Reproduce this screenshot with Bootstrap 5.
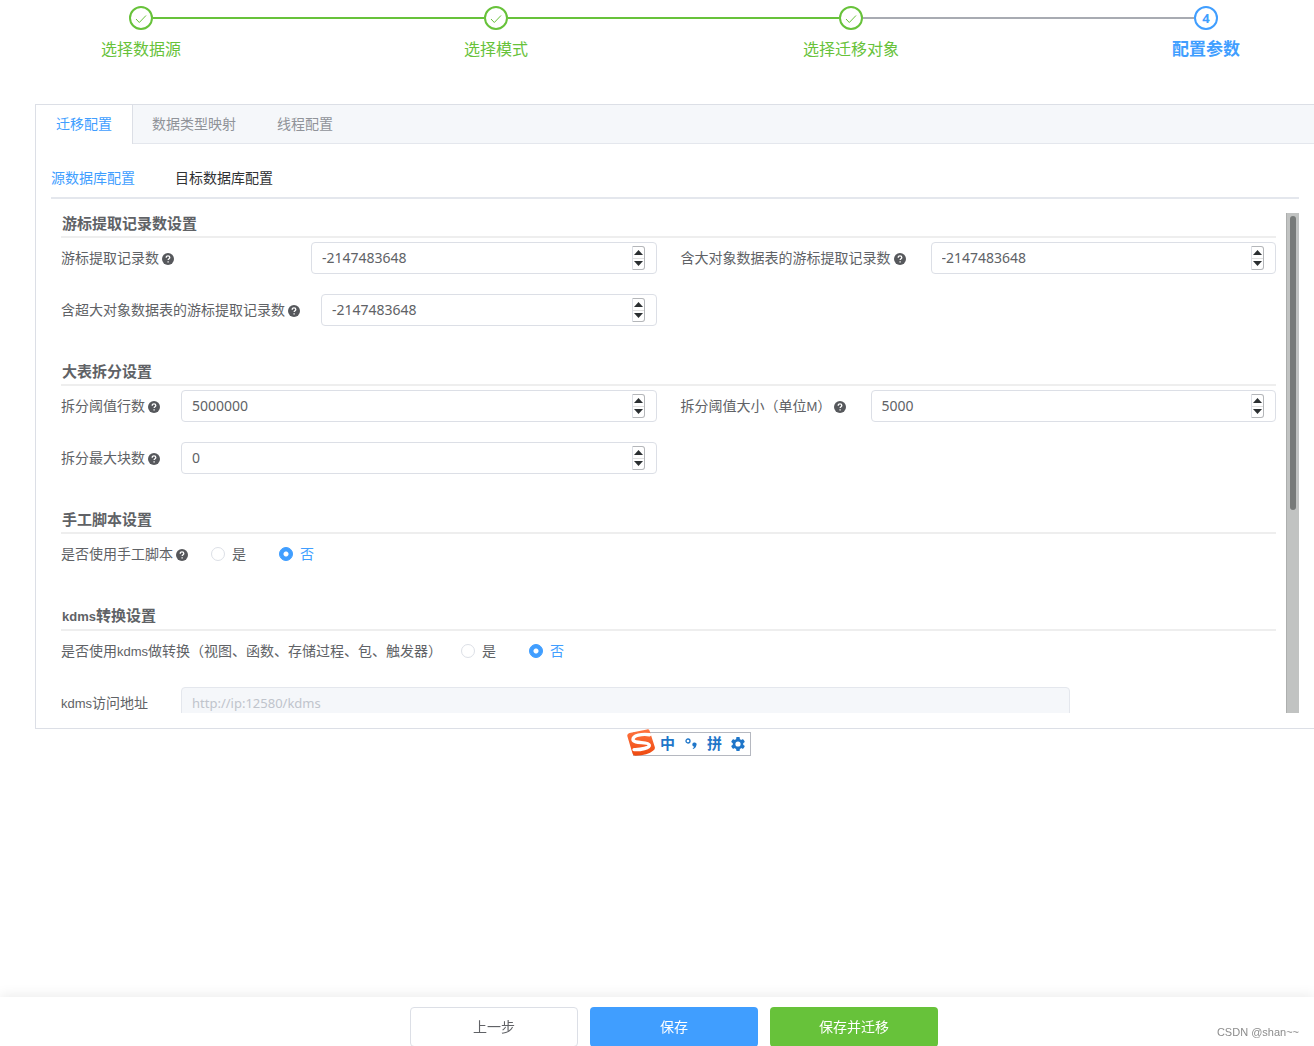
<!DOCTYPE html>
<html lang="zh-CN">
<head>
<meta charset="utf-8">
<meta name="viewport" content="width=device-width, initial-scale=1">
<title>配置参数</title>
<link href="https://cdn.jsdelivr.net/npm/bootstrap@5.3.0/dist/css/bootstrap.min.css" rel="stylesheet">
<style>
  :root { --blue: #409eff; --green: #67c23a; --text: #606266; --line: #dcdfe6; --line-soft: #e4e7ed; --fill: #f5f7fa; }
  body { font-family: "Liberation Sans", "Noto Sans CJK SC", sans-serif; font-size: 14px; line-height: 20px; color: var(--text); min-height: 100vh; }
  a { text-decoration: none; color: inherit; }

  /* step bar */
  .steps { padding: 6px 96px 0 129px; height: 104px; list-style: none; margin: 0; }
  .step { width: 24px; color: var(--green); font-size: 16px; line-height: 24px; }
  .step-icon { width: 24px; height: 24px; border: 2px solid currentColor; border-radius: 50%; flex: none; margin-bottom: 8px; }
  .step-line { height: 2px; background: var(--green); margin-top: 11px; }
  .step-line.pending { background: #a8abb2; }
  .step.current { color: var(--blue); font-weight: 700; font-size: 17px; }
  .step.current .step-icon { font: 700 13px "Noto Sans", sans-serif; }

  /* outer panel */
  .config-panel { margin-left: 35px; border: 1px solid var(--line); border-right: 0; }
  .tab-head { background: var(--fill); border-bottom: 1px solid var(--line-soft); height: 39px; }
  .tab-head a { padding: 0 20px; line-height: 39px; color: #909399; margin-right: 1px; }
  .tab-head a.active { background: #fff; color: var(--blue); border-right: 1px solid var(--line); height: 39px; margin-right: -1px; }
  .panel-inner { padding: 15px; }
  .sub-tabs { height: 40px; border-bottom: 2px solid var(--line-soft); gap: 40px; margin-bottom: 14px; color: #303133; line-height: 38px; }
  .sub-tabs a.active { color: var(--blue); }

  /* scrolling form */
  .scroll-view { height: 500px; overflow: hidden; }
  .form-body { padding: 0 10px; min-width: 0; }
  .form-body > * { flex-shrink: 0; }
  .track { width: 13px; flex: none; background: #c1c3c2; border-left: 1px solid #adafae; padding: 3px 3px; }
  .thumb { height: 294px; border-radius: 3px; background: #777a79; }
  .group-title { font-size: 15px; font-weight: 700; line-height: 21px; padding: 0 0 2px 1px; margin: 15px 0 4px; border-bottom: 2px solid #eee; }
  .group-title.first { margin-top: 0; }
  .field { height: 32px; margin-bottom: 20px; }
  .field-label { flex: none; }
  .w-120 { width: 120px; } .w-150 { width: 150px; } .w-190 { width: 190px; }
  .w-250 { width: 250px; } .w-260 { width: 260px; } .w-400 { width: 400px; }
  .latin { font-size: 13px; }
  .help { width: 12px; height: 12px; margin: 2px 0 0 3px; flex: none; }
  .field .form-control { height: 32px; padding: 0 10px 2px; border-color: var(--line); border-radius: 4px; font: 14px "Noto Sans", sans-serif; color: var(--text); }
  .field .form-control:disabled { background: var(--fill); border-color: var(--line-soft); }
  .field .form-control::placeholder { color: #c0c4cc; opacity: 1; font-size: 13px; }
  .form-control[type=number] { appearance: textfield; -moz-appearance: textfield; }
  .form-control::-webkit-inner-spin-button { display: none; }
  .stepper { top: 4px; right: 12px; width: 13px; height: 24px; border: 1px solid #b4b6b9; border-left-color: #dcdfe6; border-radius: 0 3px 3px 0; background: #fff; }
  .stepper button { flex: 1; padding: 0; border: 0; background: none; display: flex; align-items: center; justify-content: center; }
  .stepper button + button { border-top: 1px solid #e0e0e0; }
  .stepper svg { width: 9px; height: 5px; fill: #2b2f31; }
  .pick { margin-right: 33px; gap: 7px; }
  .pick .form-check-input { width: 14px; height: 14px; margin: 0; border-color: var(--line); background-image: none; }
  .pick .form-check-input:checked { background-color: var(--blue); border-color: var(--blue); background-image: radial-gradient(circle, #fff 0 2px, transparent 3px); }
  .pick .form-check-input:checked + label { color: var(--blue); }

  /* input-method bar floating over the page */
  .ime { left: 627px; top: 729px; }
  .ime-box { margin: 3px 0 0 6px; width: 118px; height: 24px; border: 1px solid #b5b8c0; background: #fff; padding: 0 5px 0 26px; color: #1f76c9; font-size: 15px; font-weight: 700; }
  .ime-logo { left: 0; top: 0; width: 28px; height: 27px; }

  /* footer */
  .action-bar { height: 49px; padding: 10px 0 0 34px; gap: 12px; background: #fff; box-shadow: 0 -2px 12px rgba(0,0,0,.08); }
  .action-bar .btn { width: 168px; height: 40px; flex: none; padding: 0; font-size: 14px; border-radius: 4px; line-height: 38px; }
  .btn-back { border-color: var(--line); color: var(--text); background: #fff; }
  .btn-save { background: var(--blue); color: #fff; }
  .btn-run { background: var(--green); color: #fff; }
  .watermark { right: 15px; bottom: 5px; font-size: 11px; line-height: 18px; color: #8c8c8c; }
</style>
<script src="https://cdn.jsdelivr.net/npm/bootstrap@5.3.0/dist/js/bootstrap.bundle.min.js"></script>
</head>
<body class="bg-white overflow-hidden">
<svg class="d-none" aria-hidden="true">
  <symbol id="i-help" viewBox="0 0 12 12"><circle cx="6" cy="6" r="6" fill="#56585c"/><path d="M4.2 4.7C4.2 3.5 5 2.9 6 2.9s1.800.6 1.800 1.600C7.800 5.700 6.100 5.700 6.100 7.100M6.100 8.200v1.200" fill="none" stroke="#fff" stroke-width="1.300"/></symbol>
  <symbol id="i-up" viewBox="0 0 9 5"><path d="M0 5 4.500 0 9 5z"/></symbol>
  <symbol id="i-down" viewBox="0 0 9 5"><path d="M0 0h9L4.500 5z"/></symbol>
  <symbol id="i-check" viewBox="0 0 20 20"><path d="m5 11 3.300 3.500L15 7.500" fill="none" stroke="currentColor" stroke-width="1"/></symbol>
</svg>

<ol class="steps d-flex align-items-start">
  <li class="step d-flex flex-column align-items-center text-nowrap"><span class="step-icon"><svg class="d-block" width="20" height="20"><use href="#i-check"/></svg></span>选择数据源</li>
  <li class="step-line flex-grow-1" aria-hidden="true"></li>
  <li class="step d-flex flex-column align-items-center text-nowrap"><span class="step-icon"><svg class="d-block" width="20" height="20"><use href="#i-check"/></svg></span>选择模式</li>
  <li class="step-line flex-grow-1" aria-hidden="true"></li>
  <li class="step d-flex flex-column align-items-center text-nowrap"><span class="step-icon"><svg class="d-block" width="20" height="20"><use href="#i-check"/></svg></span>选择迁移对象</li>
  <li class="step-line pending flex-grow-1" aria-hidden="true"></li>
  <li class="step current d-flex flex-column align-items-center text-nowrap" aria-current="step"><span class="step-icon d-flex align-items-center justify-content-center">4</span>配置参数</li>
</ol>

<main class="config-panel">
  <nav class="tab-head d-flex">
    <a href="#" class="active">迁移配置</a>
    <a href="#">数据类型映射</a>
    <a href="#">线程配置</a>
  </nav>
  <div class="panel-inner">
    <nav class="sub-tabs d-flex">
      <a href="#" class="active">源数据库配置</a>
      <a href="#">目标数据库配置</a>
    </nav>
    <div class="scroll-view d-flex">
      <form class="form-body flex-grow-1 d-flex flex-column">
        <h2 class="group-title first">游标提取记录数设置</h2>
        <div class="row gx-4">
          <div class="col-6"><div class="field d-flex align-items-center">
            <label for="f1" class="field-label w-250 d-flex align-items-center">游标提取记录数<svg class="help"><use href="#i-help"/></svg></label>
            <div class="position-relative flex-grow-1"><input id="f1" type="number" class="form-control" value="-2147483648"><span class="stepper position-absolute d-flex flex-column"><button type="button" aria-label="增加"><svg><use href="#i-up"/></svg></button><button type="button" aria-label="减少"><svg><use href="#i-down"/></svg></button></span></div>
          </div></div>
          <div class="col-6"><div class="field d-flex align-items-center">
            <label for="f2" class="field-label w-250 d-flex align-items-center">含大对象数据表的游标提取记录数<svg class="help"><use href="#i-help"/></svg></label>
            <div class="position-relative flex-grow-1"><input id="f2" type="number" class="form-control" value="-2147483648"><span class="stepper position-absolute d-flex flex-column"><button type="button" aria-label="增加"><svg><use href="#i-up"/></svg></button><button type="button" aria-label="减少"><svg><use href="#i-down"/></svg></button></span></div>
          </div></div>
          <div class="col-6"><div class="field d-flex align-items-center">
            <label for="f3" class="field-label w-260 d-flex align-items-center">含超大对象数据表的游标提取记录数<svg class="help"><use href="#i-help"/></svg></label>
            <div class="position-relative flex-grow-1"><input id="f3" type="number" class="form-control" value="-2147483648"><span class="stepper position-absolute d-flex flex-column"><button type="button" aria-label="增加"><svg><use href="#i-up"/></svg></button><button type="button" aria-label="减少"><svg><use href="#i-down"/></svg></button></span></div>
          </div></div>
        </div>

        <h2 class="group-title">大表拆分设置</h2>
        <div class="row gx-4">
          <div class="col-6"><div class="field d-flex align-items-center">
            <label for="f4" class="field-label w-120 d-flex align-items-center">拆分阈值行数<svg class="help"><use href="#i-help"/></svg></label>
            <div class="position-relative flex-grow-1"><input id="f4" type="number" class="form-control" value="5000000"><span class="stepper position-absolute d-flex flex-column"><button type="button" aria-label="增加"><svg><use href="#i-up"/></svg></button><button type="button" aria-label="减少"><svg><use href="#i-down"/></svg></button></span></div>
          </div></div>
          <div class="col-6"><div class="field d-flex align-items-center">
            <label for="f5" class="field-label w-190 d-flex align-items-center"><span>拆分阈值大小（单位<span class="latin">M</span>）</span><svg class="help"><use href="#i-help"/></svg></label>
            <div class="position-relative flex-grow-1"><input id="f5" type="number" class="form-control" value="5000"><span class="stepper position-absolute d-flex flex-column"><button type="button" aria-label="增加"><svg><use href="#i-up"/></svg></button><button type="button" aria-label="减少"><svg><use href="#i-down"/></svg></button></span></div>
          </div></div>
          <div class="col-6"><div class="field d-flex align-items-center">
            <label for="f6" class="field-label w-120 d-flex align-items-center">拆分最大块数<svg class="help"><use href="#i-help"/></svg></label>
            <div class="position-relative flex-grow-1"><input id="f6" type="number" class="form-control" value="0"><span class="stepper position-absolute d-flex flex-column"><button type="button" aria-label="增加"><svg><use href="#i-up"/></svg></button><button type="button" aria-label="减少"><svg><use href="#i-down"/></svg></button></span></div>
          </div></div>
        </div>

        <h2 class="group-title">手工脚本设置</h2>
        <div class="field d-flex align-items-center" role="radiogroup" aria-labelledby="l7">
          <span id="l7" class="field-label w-150 d-flex align-items-center">是否使用手工脚本<svg class="help"><use href="#i-help"/></svg></span>
          <div class="pick d-flex align-items-center"><input class="form-check-input" type="radio" name="script" id="s1"><label for="s1">是</label></div>
          <div class="pick d-flex align-items-center"><input class="form-check-input" type="radio" name="script" id="s2" checked><label for="s2">否</label></div>
        </div>

        <h2 class="group-title"><span class="latin">kdms</span>转换设置</h2>
        <div class="field d-flex align-items-center" role="radiogroup" aria-labelledby="l8">
          <span id="l8" class="field-label w-400">是否使用<span class="latin">kdms</span>做转换（视图、函数、存储过程、包、触发器）</span>
          <div class="pick d-flex align-items-center"><input class="form-check-input" type="radio" name="kdms" id="k1"><label for="k1">是</label></div>
          <div class="pick d-flex align-items-center"><input class="form-check-input" type="radio" name="kdms" id="k2" checked><label for="k2">否</label></div>
        </div>
        <div class="row gx-4">
          <div class="col-10"><div class="field d-flex align-items-center">
            <label for="f9" class="field-label w-120"><span class="latin">kdms</span>访问地址</label>
            <input id="f9" type="text" class="form-control" placeholder="http://ip:12580/kdms" disabled>
          </div></div>
        </div>
      </form>
      <div class="track" aria-hidden="true"><div class="thumb"></div></div>
    </div>
  </div>
</main>

<div class="ime position-absolute">
  <div class="ime-box d-flex align-items-center justify-content-between">
    <span>中</span>
    <svg width="14" height="14" viewBox="0 0 14 14"><circle cx="4" cy="4" r="2" fill="none" stroke="#1f76c9" stroke-width="1.300"/><path d="M8.300 7.500a2.100 2.100 0 1 1 4 1c-.3 1.600-1.500 3-3.300 3.500l-.3-.7c.9-.4 1.400-1 1.500-1.700-1.200 0-1.900-.9-1.900-2.100z" fill="#1f76c9"/></svg>
    <span>拼</span>
    <svg width="14" height="14" viewBox="0 0 14 14"><g fill="#1f76c9"><circle cx="7" cy="7" r="5.300"/><rect x="5.200" width="3.600" height="14" rx=".8"/><rect x="5.200" width="3.600" height="14" rx=".8" transform="rotate(60 7 7)"/><rect x="5.200" width="3.600" height="14" rx=".8" transform="rotate(120 7 7)"/></g><circle cx="7" cy="7" r="2.600" fill="#fff"/></svg>
  </div>
  <svg class="ime-logo position-absolute" viewBox="0 0 28 27"><defs><linearGradient id="og" x1="0" y1="0" x2="0" y2="1"><stop offset="0" stop-color="#ff7440"/><stop offset="1" stop-color="#ee4a10"/></linearGradient></defs><path d="M2.500 4 20 .400q2-.4 2.600 1.400L27.800 18q.6 2.500-1.800 3.700-5 4.300-17.500 5-2.300 0-3-2.200L.300 7Q0 4.700 2.500 4z" fill="url(#og)"/><path d="M22.500 5.800C15 4.600 5.700 6.500 6 10.700c.3 4.200 15.600 1.700 16.300 5.300.5 3-8.300 4.800-15.300 4.600" fill="none" stroke="#fff" stroke-width="3.400" stroke-linecap="round"/></svg>
</div>

<footer class="action-bar fixed-bottom d-flex justify-content-center">
  <button type="button" class="btn btn-back">上一步</button>
  <button type="button" class="btn btn-save">保存</button>
  <button type="button" class="btn btn-run">保存并迁移</button>
  <span class="watermark position-absolute">CSDN @shan~~</span>
</footer>
</body>
</html>
